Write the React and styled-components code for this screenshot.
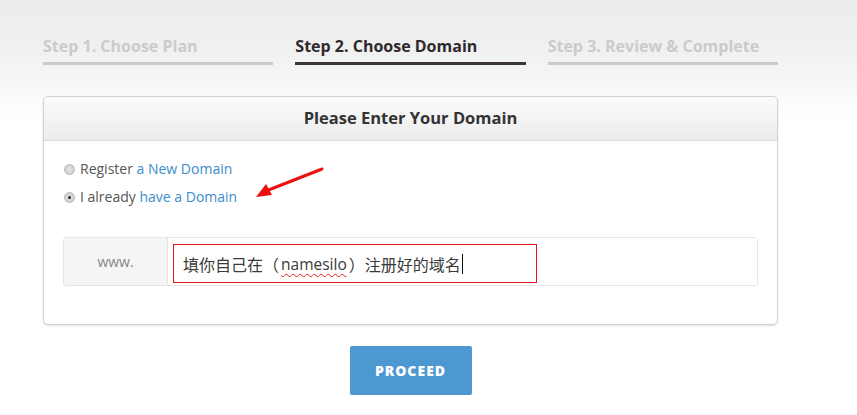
import React from "react";
import styled, { createGlobalStyle } from "styled-components";

const Global = createGlobalStyle`
  html, body { margin: 0; padding: 0; }
  body {
    font-family: "Open Sans", "Noto Sans CJK SC", sans-serif;
    background: #fff;
  }
`;

const Page = styled.div`
  min-height: 415px;
  padding: 36px 0 0 43px;
  box-sizing: border-box;
  background: linear-gradient(#ececec 0, #f1f1f1 55px, #fafafa 95px, #fff 120px);
`;

const Wrap = styled.div`
  width: 735px;
`;

// the three step tabs
const Steps = styled.div`
  display: grid;
  grid-template-columns: repeat(3, 1fr);
  column-gap: 22px;
`;

const Step = styled.div`
  font-size: 16px;
  font-weight: 700;
  line-height: 21px;
  padding-bottom: 5px;
  color: ${(p) => (p.active ? "#2f292e" : "#cbcbcb")};
  border-bottom: 3px solid ${(p) => (p.active ? "#3b3338" : "#cbcbcb")};
`;

const Panel = styled.div`
  margin-top: 31px;
  border: 1px solid #d2d2d2;
  border-radius: 5px;
  background: #fff;
  box-shadow: 0 1px 2px rgba(0, 0, 0, 0.12);
`;

const PanelHead = styled.div`
  height: 41px;
  padding-bottom: 2px;
  display: flex;
  align-items: center;
  justify-content: center;
  border-bottom: 1px solid #dcdcdc;
  border-radius: 5px 5px 0 0;
  background: linear-gradient(#fbfbfb, #ececec);
  font-size: 16.5px;
  font-weight: 700;
  color: #333;
`;

const PanelBody = styled.div`
  position: relative;
  padding: 18px 19px 38px 19px;
`;

const Options = styled.div`
  display: flex;
  flex-direction: column;
  gap: 8px;
  padding-left: 1px;
`;

const Option = styled.label`
  display: flex;
  align-items: center;
  gap: 5px;
  font-size: 14px;
  line-height: 20px;
  color: #555;
`;

const Radio = styled.span`
  width: 9px;
  height: 9px;
  border-radius: 50%;
  border: 1px solid #b5b5b5;
  background: radial-gradient(circle, #e4e4e4, #c9c9c9);
  display: flex;
  align-items: center;
  justify-content: center;
  &::after {
    content: "";
    width: 3px;
    height: 3px;
    border-radius: 50%;
    background: ${(p) => (p.checked ? "#222" : "transparent")};
  }
`;

const Link = styled.span`
  color: #3b8dcc;
`;

const Arrow = styled.svg`
  position: absolute;
  left: 208px;
  top: 25px;
`;

const Group = styled.div`
  margin-top: 30px;
  display: flex;
  height: 47px;
  border: 1px solid #e6e6e6;
  border-radius: 3px;
`;

const Addon = styled.div`
  width: 103px;
  display: flex;
  align-items: center;
  justify-content: center;
  background: #f5f5f5;
  border-right: 1px solid #e2e2e2;
  font-size: 14px;
  color: #858585;
`;

const Field = styled.div`
  flex: 1;
  padding: 6px 0 0 5px;
  background: #fff;
`;

const Input = styled.div`
  width: 353px;
  height: 37px;
  border: 1px solid #e8151b;
  display: flex;
  align-items: center;
  padding-left: 9px;
  font-family: "Noto Sans CJK SC", "Open Sans", sans-serif;
  font-size: 16px;
  color: #3a3a3a;
`;

const Spell = styled.span`
  font-family: "Open Sans", sans-serif;
  font-size: 15.5px;
  margin: 0 2px;
  text-decoration: underline wavy #e02020;
  text-decoration-thickness: 1px;
  text-underline-offset: 3px;
`;

const Caret = styled.span`
  width: 1px;
  height: 20px;
  background: #111;
  margin-left: 1px;
`;

const Actions = styled.div`
  display: flex;
  justify-content: center;
  margin-top: 21px;
`;

const Button = styled.button`
  width: 122px;
  height: 49px;
  border: none;
  border-radius: 2px;
  background: #4e98d2;
  color: #fff;
  font-family: "Open Sans", sans-serif;
  font-size: 14px;
  font-weight: 800;
  letter-spacing: 1px;
`;

function App() {
  return (
    <Page>
      <Global />
      <Wrap>
        <Steps>
          <Step>Step 1. Choose Plan</Step>
          <Step active>Step 2. Choose Domain</Step>
          <Step>Step 3. Review &amp; Complete</Step>
        </Steps>

        <Panel>
          <PanelHead>Please Enter Your Domain</PanelHead>
          <PanelBody>
            <Options>
              <Option>
                <Radio />
                <span>
                  Register <Link>a New Domain</Link>
                </span>
              </Option>
              <Option>
                <Radio checked />
                <span>
                  I already <Link>have a Domain</Link>
                </span>
              </Option>
            </Options>
            <Arrow width="74" height="34" viewBox="0 0 74 34">
              <line x1="70" y1="3" x2="14" y2="25" stroke="#ee1111" strokeWidth="3" strokeLinecap="round" />
              <polygon points="4,31 14,18 20,29" fill="#ee1111" />
            </Arrow>

            <Group>
              <Addon>www.</Addon>
              <Field>
                <Input>
                  填你自己在（<Spell>namesilo</Spell>）注册好的域名
                  <Caret />
                </Input>
              </Field>
            </Group>
          </PanelBody>
        </Panel>

        <Actions>
          <Button>PROCEED</Button>
        </Actions>
      </Wrap>
    </Page>
  );
}

export default App;
